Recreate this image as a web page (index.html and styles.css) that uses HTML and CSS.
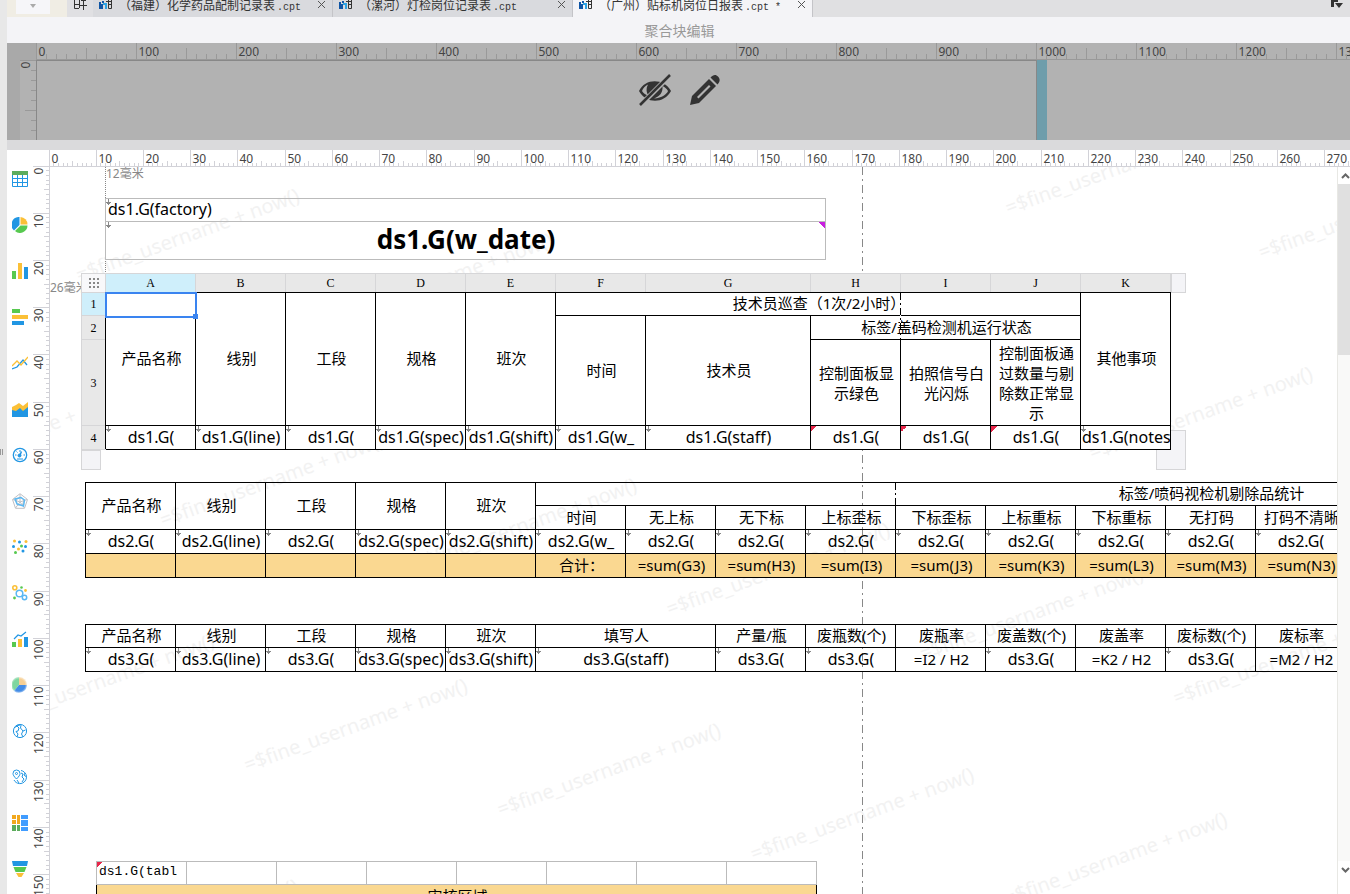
FILE: index.html
```
<!DOCTYPE html>
<html lang="zh-CN">
<head>
  <meta charset="UTF-8" />
  <meta name="viewport" content="width=device-width, initial-scale=1.0"/>
  <title>聚合块编辑</title>
  <link rel="stylesheet" href="styles.css">
</head>
<body>
  <svg class="defs" aria-hidden="true">
    <symbol id="file" viewBox="0 0 14 12">
      <path d="M0 4H2V6H4V8H2V11H0Z" fill="#0f55a5"/>
      <path d="M2 8H4V11H2ZM3 3H5V5H3Z" fill="#0f55a5"/>
      <path d="M4 5H8V11H6V7H4Z" fill="#2ea3e3"/>
      <path d="M7 3.500H13M9.500 0V10.500H12.500V0M9 6.500H13" fill="none" stroke="#333"/>
    </symbol>
  </svg>

  <div class="dock"><span class="grip"></span></div>

  <main class="designer">
    <nav class="tabs">
      <div class="tool-slot"><button class="tool-drop" aria-label="更多"><svg width="8" height="5"><path d="M1 1H7L4 5Z" fill="#aaa"/></svg></button></div>
      <button class="new-tab" aria-label="新建">
        <svg width="14" height="14" viewBox="0 0 14 14"><path d="M1.500 0V11.500H6M1 7.500H6M6.500 0V11M7 8.500H14M10.500 4V13M8 3.500H13" fill="none" stroke="#333"/></svg>
      </button>
      <div class="tab">
        <svg class="tab-icon"><use href="#file"/></svg>
        <span class="tab-name">（福建）化学药品配制记录表<small>.cpt</small></span>
        <button class="tab-close" aria-label="关闭"><svg width="9" height="9"><path d="M1 1L8 8M8 1L1 8"/></svg></button>
      </div>
      <div class="tab">
        <svg class="tab-icon"><use href="#file"/></svg>
        <span class="tab-name">（漯河）灯检岗位记录表<small>.cpt</small></span>
        <button class="tab-close" aria-label="关闭"><svg width="9" height="9"><path d="M1 1L8 8M8 1L1 8"/></svg></button>
      </div>
      <div class="tab active">
        <svg class="tab-icon"><use href="#file"/></svg>
        <span class="tab-name">（广州）贴标机岗位日报表<small>.cpt *</small></span>
        <button class="tab-close" aria-label="关闭"><svg width="9" height="9"><path d="M1 1L8 8M8 1L1 8"/></svg></button>
      </div>
      <button class="tab-list" aria-label="全部标签"><svg width="12" height="10"><path d="M0 0H7V3H3V8H0ZM4 4H12L8 9Z" fill="#333"/></svg></button>
    </nav>

    <h1 class="title">聚合块编辑</h1>

    <section class="block-editor">
      <div class="block-corner"></div>
      <div class="ruler-x" data-step="100" data-sub="10"></div>
      <div class="ruler-y block-y" data-step="100" data-sub="10"></div>
      <div class="block-body">
        <div class="block-page"></div>
        <div class="block-edge"></div>
        <div class="block-actions">
          <button aria-label="隐藏">
            <svg width="34" height="32" viewBox="0 0 34 32">
              <path d="M1 17C7 4 26 4 33 17C26 30 8 30 1 17Z" fill="#333"/>
              <path d="M4 17C5 14 7 12 10 10.500C8 14 8 19 11 22C8 21 5 19 4 17ZM30 17C29 20 24 24 16 24.500C22 22 25 19 24.500 12C27 13 29 15 30 17Z" fill="#b2b2b2"/>
              <path d="M0 30L31 -1L35 2L4 33Z" fill="#b2b2b2"/>
              <path d="M2 31L32 1" stroke="#333" stroke-width="2.500"/>
            </svg>
          </button>
          <button aria-label="编辑">
            <svg width="32" height="32" viewBox="0 0 32 32">
              <path d="M1 31L3 22L20 5L27 12L10 29Z" fill="#333"/>
              <path d="M8 23L20 11L21.500 12.500L9.500 24.500Z" fill="#b2b2b2"/>
              <path d="M21.500 3.500C24 .5 27 0 29 2.500C31.500 5 31 8 28.500 10.500Z" fill="#333"/>
            </svg>
          </button>
        </div>
      </div>
    </section>

    <div class="splitter"></div>

    <section class="report">
      <div class="ruler-x mm" data-step="47.244" data-sub="10" data-label="10"></div>
      <aside class="palette">
        <button aria-label="表格"><svg viewBox="0 0 16 16"><path d="M0 0H16V4H0Z" fill="#5cac5c"/><path d="M.5 4V15.500H15.500V4M0 7.500H16M0 11.500H16M5.500 4V16M10.500 4V16" fill="none" stroke="#2196e3"/></svg></button>
        <button aria-label="饼图"><svg viewBox="0 0 16 16"><path d="M7.500 0V8L2 13.500A7.700 7.700 0 0 1 7.500 0Z" fill="#2196e3"/><path d="M8.500 0A7.500 7.500 0 0 1 15.500 7.500H8.500Z" fill="#fbc037"/><path d="M15.500 8.500A7.500 7.500 0 0 1 3 14L8.500 8.500Z" fill="#57c94f"/></svg></button>
        <button aria-label="柱形图"><svg viewBox="0 0 16 16"><path d="M0 8H4V16H0Z" fill="#57c94f"/><path d="M6 0H10V16H6Z" fill="#fbc037"/><path d="M12 4H16V16H12Z" fill="#2196e3"/></svg></button>
        <button aria-label="条形图"><svg viewBox="0 0 16 16"><path d="M0 0H8V4H0Z" fill="#57c94f"/><path d="M0 6H16V10H0Z" fill="#fbc037"/><path d="M0 12H12V16H0Z" fill="#2196e3"/></svg></button>
        <button aria-label="折线图"><svg viewBox="0 0 16 16" fill="none"><path d="M0 14L5 12L11 5L15 10" stroke="#2196e3" stroke-width="1.300"/><path d="M0 11L5 6L9 10L16 2" stroke="#fbc037" stroke-width="1.300"/></svg></button>
        <button aria-label="面积图"><svg viewBox="0 0 16 16"><path d="M0 6L4 4L7 2L11 5L16 1V11H0Z" fill="#fbc037"/><path d="M0 9L4 10L8 7L11 10L16 6V16H0Z" fill="#2196e3"/></svg></button>
        <button aria-label="仪表盘"><svg viewBox="0 0 16 16" fill="none" stroke="#2196e3"><circle cx="8" cy="8" r="6.700" stroke-width="1.300"/><path d="M3 8H4.500M11.500 8H13M8 3V5M4.500 4.500L5.500 5.500M5 12H11"/><circle cx="7.500" cy="8.500" r="1.500" fill="#2196e3"/><path d="M8 8L9.500 4.500" stroke-width="1.500"/></svg></button>
        <button aria-label="雷达图"><svg viewBox="0 0 16 16" fill="none"><path d="M8 .7L15.500 6.500L12.500 15.300H3.500L.5 6.500ZM8 4L12 7L10.500 12H5.500L4 7ZM8 1V9L15 6.500M8 9L12.500 15M8 9L3.500 15M8 9L1 6.500" stroke="#c0c0c4"/><path d="M3 6L9 4.500L12.500 7L11.500 13L5 11Z" stroke="#5bb8f2" stroke-width="1.500"/></svg></button>
        <button aria-label="散点图"><svg viewBox="0 0 16 16"><g fill="#fbc037"><circle cx="2.500" cy="2" r="1.500"/><circle cx="14" cy="2.500" r="1.500"/><circle cx="6.500" cy="10" r="1.500"/></g><g fill="#2196e3"><circle cx="7.500" cy="3" r="1.500"/><circle cx="1.500" cy="7.500" r="1.500"/><circle cx="13.500" cy="7.500" r="1.500"/><circle cx="11" cy="12" r="1.500"/></g><g fill="#57c94f"><circle cx="9.500" cy="7" r="1.500"/><circle cx="3.500" cy="13.500" r="1.500"/></g></svg></button>
        <button aria-label="气泡图"><svg viewBox="0 0 16 16" fill="none"><circle cx="2.800" cy="2.800" r="2" stroke="#fbc037" stroke-width="1.600"/><circle cx="7.500" cy="8.500" r="3.300" stroke="#5bb8f2" stroke-width="1.500"/><circle cx="12.500" cy="12.500" r="2.200" stroke="#5bb8f2" stroke-width="1.500"/><circle cx="9.500" cy="2.500" r="1.300" fill="#57c94f"/><circle cx="13.500" cy="5.500" r="1.400" fill="#fbc037"/><circle cx="2.500" cy="13" r="1.400" fill="#57c94f"/></svg></button>
        <button aria-label="组合图"><svg viewBox="0 0 16 16"><path d="M0 11H4V16H0Z" fill="#57c94f"/><path d="M6 8H10V16H6Z" fill="#fbc037"/><path d="M12 6H16V16H12Z" fill="#2196e3"/><path d="M2 8L6 4L9 5L14 1" fill="none" stroke="#2196e3" stroke-width="1.200"/></svg></button>
        <button aria-label="渐变饼图">
          <svg viewBox="0 0 16 16">
            <defs><radialGradient id="rim"><stop offset=".7" stop-color="#fff" stop-opacity="0"/><stop offset="1" stop-color="#fff" stop-opacity=".7"/></radialGradient></defs>
            <path d="M7 8V0A8 8 0 0 0 2 14Z" fill="#7fd6a0"/><path d="M7 8V0A8 8 0 0 1 15 8Z" fill="#f6cf94"/><path d="M7 8H15A8 8 0 0 1 2 14Z" fill="#438ce6"/>
            <circle cx="7" cy="8" r="8.500" fill="url(#rim)"/>
          </svg>
        </button>
        <button aria-label="地图"><svg viewBox="0 0 16 16" fill="none" stroke="#2196e3"><circle cx="8" cy="8" r="6.600"/><path d="M2 5L5 3L7 5L6 8L4 8.500L6 11L5 14M9 2L8.500 5L11 8L13.500 7M11 8L9.500 11L11 14M4 3L8 2"/></svg></button>
        <button aria-label="地图标记"><svg viewBox="0 0 16 16" fill="none" stroke="#2196e3"><path d="M9 1.500A6.600 6.600 0 1 1 2 11"/><path d="M4.500 10C2 7.500 1 6 1 4.500A3.500 3.500 0 0 1 8 4.500C8 6 7 7.500 4.500 10Z"/><circle cx="4.500" cy="4.500" r="1"/><path d="M9 4L11 5L10 8L12 10L10 13M13 4L12 6L14.500 8M5 11L7 14"/></svg></button>
        <button aria-label="矩形树图"><svg viewBox="0 0 16 16"><path d="M0 0H4V4H0ZM0 5H4V9H0ZM5 0H8V9H5Z" fill="#f2a81d"/><path d="M0 10H4V16H0ZM5 10H8V16H5Z" fill="#5cac5c"/><path d="M9 0H16V4H9ZM9 5H16V11H9ZM9 12H16V16H9Z" fill="#409cff"/></svg></button>
        <button aria-label="漏斗图"><svg viewBox="0 0 16 16"><path d="M0 0H16L15 5H1Z" fill="#2196e3"/><path d="M1.500 6H14.500L12.500 11H3.500Z" fill="#57c94f"/><path d="M4 12H12L9.500 16H6.500Z" fill="#fbc037"/></svg></button>
      </aside>
      <div class="ruler-y mm" data-step="47.244" data-sub="10" data-label="10"></div>

      <div class="canvas">
        <svg class="backdrop" id="backdrop" aria-hidden="true"></svg>
        <span class="guide guide-top">12毫米</span>
        <span class="guide guide-left">26毫米</span>

        <table class="sheet title-sheet">
          <tr class="h23"><td class="down left">ds1.G(factory)</td></tr>
          <tr class="h38"><td class="down expand date">ds1.G(w_date)</td></tr>
        </table>

        <div class="selected-block">
          <table class="sheet patrol">
            <colgroup><col class="w24"><col class="w90" span="6"><col class="w165"><col class="w90" span="4"></colgroup>
            <tr class="heads">
              <th class="corner"><svg width="12" height="10"><path d="M1 1H11M1 5H11M1 9H11" stroke="#888" stroke-width="2" stroke-dasharray="2 2"/></svg></th>
              <th class="on">A</th><th>B</th><th>C</th><th>D</th><th>E</th><th>F</th><th>G</th><th>H</th><th>I</th><th>J</th><th>K</th>
            </tr>
            <tr class="h23">
              <th class="on">1</th>
              <td rowspan="3">产品名称</td><td rowspan="3">线别</td><td rowspan="3">工段</td><td rowspan="3">规格</td><td rowspan="3">班次</td>
              <td colspan="5">技术员巡查（1次/2小时）</td>
              <td rowspan="3">其他事项</td>
            </tr>
            <tr class="h24">
              <th>2</th>
              <td rowspan="2">时间</td><td rowspan="2">技术员</td><td colspan="3">标签/盖码检测机运行状态</td>
            </tr>
            <tr class="h86">
              <th>3</th>
              <td class="wrap">控制面板显示绿色</td><td class="wrap">拍照信号白光闪烁</td><td class="wrap">控制面板通过数量与剔除数正常显示</td>
            </tr>
            <tr class="h24">
              <th>4</th>
              <td class="down">ds1.G(</td><td class="down">ds1.G(line)</td><td class="down">ds1.G(</td><td class="down">ds1.G(spec)</td><td class="down">ds1.G(shift)</td>
              <td class="down">ds1.G(w_</td><td class="down">ds1.G(staff)</td><td class="cond">ds1.G(</td><td class="cond">ds1.G(</td><td class="cond">ds1.G(</td><td class="down">ds1.G(notes</td>
            </tr>
          </table>
          <span class="selection"></span>
          <span class="page-break patrol-break"></span>
          <span class="nub nub-right"></span>
          <span class="nub nub-bottom"></span>
          <span class="nub nub-corner"></span>
        </div>

        <div class="reject-block">
          <table class="sheet reject">
            <colgroup><col class="w90" span="20"></colgroup>
            <tr class="h23">
              <td rowspan="2">产品名称</td><td rowspan="2">线别</td><td rowspan="2">工段</td><td rowspan="2">规格</td><td rowspan="2">班次</td>
              <td colspan="15">标签/喷码视检机剔除品统计</td>
            </tr>
            <tr class="h24">
              <td>时间</td><td>无上标</td><td>无下标</td><td>上标歪标</td><td>下标歪标</td><td>上标重标</td><td>下标重标</td><td>无打码</td><td>打码不清晰</td>
            </tr>
            <tr class="h24">
              <td class="down">ds2.G(</td><td class="down">ds2.G(line)</td><td class="down">ds2.G(</td><td class="down">ds2.G(spec)</td><td class="down">ds2.G(shift)</td>
              <td class="down">ds2.G(w_</td><td class="down">ds2.G(</td><td class="down">ds2.G(</td><td class="down">ds2.G(</td><td class="down">ds2.G(</td><td class="down">ds2.G(</td><td class="down">ds2.G(</td><td class="down">ds2.G(</td><td class="down">ds2.G(</td>
            </tr>
            <tr class="h24 sum">
              <td></td><td></td><td></td><td></td><td></td><td>合计：</td>
              <td>=sum(G3)</td><td>=sum(H3)</td><td>=sum(I3)</td><td>=sum(J3)</td><td>=sum(K3)</td><td>=sum(L3)</td><td>=sum(M3)</td><td>=sum(N3)</td>
            </tr>
          </table>
          <span class="page-break reject-break"></span>
        </div>

        <table class="sheet waste">
          <colgroup><col class="w90" span="14"></colgroup>
          <tr class="h23">
            <td>产品名称</td><td>线别</td><td>工段</td><td>规格</td><td>班次</td><td colspan="2">填写人</td>
            <td>产量/瓶</td><td>废瓶数(个)</td><td>废瓶率</td><td>废盖数(个)</td><td>废盖率</td><td>废标数(个)</td><td>废标率</td>
          </tr>
          <tr class="h24">
            <td class="down">ds3.G(</td><td class="down">ds3.G(line)</td><td class="down">ds3.G(</td><td class="down">ds3.G(spec)</td><td class="down">ds3.G(shift)</td><td class="down" colspan="2">ds3.G(staff)</td>
            <td class="down">ds3.G(</td><td class="down">ds3.G(</td><td>=I2 / H2</td><td class="down">ds3.G(</td><td>=K2 / H2</td><td class="down">ds3.G(</td><td>=M2 / H2</td>
          </tr>
        </table>

        <table class="sheet audit">
          <colgroup><col class="w90" span="8"></colgroup>
          <tr class="h23 light">
            <td class="cond left mono">ds1.G(tabl</td><td></td><td></td><td></td><td></td><td></td><td></td><td></td>
          </tr>
          <tr class="h24 sum"><td colspan="8">审核区域</td></tr>
        </table>
      </div>

      <div class="scrollbar">
        <button aria-label="向上"><svg width="9" height="6"><path d="M1 5L4.500 1.500L8 5"/></svg></button>
        <div class="track"><div class="thumb"></div></div>
        <button aria-label="向下"><svg width="9" height="6"><path d="M1 1L4.500 4.500L8 1"/></svg></button>
      </div>
    </section>
  </main>

  <script src="designer.js"></script>
</body>
</html>
```
FILE: styles.css
```
* {
  box-sizing: border-box;
}

body {
  margin: 0;
  height: 100vh;
  display: flex;
  overflow: hidden;
  background: #fff;
  color: #000;
  font-family: "Noto Sans", "Noto Sans CJK SC", sans-serif;
  font-size: 15px;
}

button {
  border: 0;
  padding: 0;
  background: none;
  display: flex;
  align-items: center;
  justify-content: center;
}

.defs {
  position: absolute;
  width: 0;
  height: 0;
}

.dock {
  width: 7px;
  background: #e8e8e8;
  display: flex;
  align-items: center;
}

.grip {
  width: 3px;
  height: 6px;
  margin-top: 10px;
  border: solid #999;
  border-width: 0 1px;
}

.designer {
  flex: 1;
  min-width: 0;
  display: flex;
  flex-direction: column;
}

/* Tabs */
.tabs {
  height: 17px;
  display: flex;
  align-items: flex-end;
  overflow: hidden;
  background: #e0e0e2;
}

.tabs > * {
  height: 26px;
}

.tool-slot {
  width: 60px;
  padding: 0 9px 3px;
  background: #f0ede4;
}

.tool-drop {
  width: 34px;
  height: 23px;
  padding-top: 6px;
  background: #f6f6f9;
}

.new-tab {
  width: 26px;
  background: #e0e0e3;
}

.tab {
  width: 240px;
  padding: 0 6px;
  display: flex;
  align-items: center;
  background: #d9dade;
  border-right: 1px solid #c4c4c8;
}

.tab.active {
  background: #f4f4f7;
}

.tab-icon {
  width: 14px;
  height: 12px;
  margin-right: 6px;
}

.tab-name {
  flex: 1;
  font-family: "Noto Sans CJK SC", sans-serif;
  font-size: 12px;
  white-space: nowrap;
  color: #333;
}

.tab-name small {
  padding-left: 2px;
  font-family: "Liberation Mono", monospace;
  font-size: 10px;
}

.tab-close svg {
  fill: none;
  stroke: #555;
}

.tab-list {
  margin-left: auto;
  padding-right: 7px;
}

.title {
  margin: 0;
  height: 26px;
  padding-left: 2px;
  line-height: 28px;
  font-size: 14px;
  font-weight: normal;
  text-align: center;
  color: #999;
  background: #f4f4f7;
}

/* Rulers */
.ruler-x,
.ruler-y {
  position: relative;
  min-width: 0;
  min-height: 0;
  overflow: hidden;
}

.ruler-x svg,
.ruler-y svg {
  position: absolute;
  width: 100%;
  height: 100%;
  font-size: 12px;
  fill: #444;
}

.ruler-x line,
.ruler-y line {
  stroke: #999;
  shape-rendering: crispEdges;
}

.mm line {
  stroke: #d2d2d8;
}

/* Aggregation block editor */
.block-editor {
  height: 97px;
  display: grid;
  grid-template-columns: 29px 1fr;
  grid-template-rows: 17px 1fr;
  background: #b2b2b2;
}

.block-corner {
  background: #a9a9a9;
}

.block-editor .ruler-x {
  border-bottom: 1px solid #999;
}

.block-y {
  border-left: 13px solid #a9a9a9;
}

.block-body {
  position: relative;
  display: flex;
}

.block-page {
  width: 1001px;
  border: solid #888;
  border-width: 1px 1px 0;
}

.block-edge {
  width: 10px;
  background: #6e9dab;
}

.block-actions {
  position: absolute;
  inset: 0 28px 20px 0;
  display: flex;
  align-items: center;
  justify-content: center;
  gap: 17px;
}

.splitter {
  height: 10px;
  background: #dadadc;
}

/* Report designer */
.report {
  flex: 1;
  min-height: 0;
  display: grid;
  grid-template-columns: 26px 17px 1fr 13px;
  grid-template-rows: 17px 1fr;
}

.report .ruler-x {
  grid-column: 3 / 5;
  border-bottom: 1px solid #d2d2d8;
  margin-left: -1px;
}

.report .ruler-y {
  border-right: 1px solid #d2d2d8;
  margin-top: -1px;
}

.palette {
  grid-column: 1;
  overflow: hidden;
}

.palette button {
  width: 26px;
  height: 46px;
}

.palette button:first-child {
  height: 24px;
  margin-bottom: 11px;
}

.palette svg {
  width: 16px;
  height: 16px;
}

.canvas {
  position: relative;
  overflow: hidden;
  padding-top: 31px;
}

.backdrop {
  position: absolute;
  inset: 0;
  width: 100%;
  height: 100%;
  font-size: 20px;
  fill: #f2f2f2;
}

.guide {
  position: absolute;
  font-size: 12px;
  line-height: 14px;
  color: #888;
}

.guide-top {
  left: 55px;
  top: 0;
  height: 107px;
  border-left: 1px dotted #888;
}

.guide-left {
  left: 0;
  top: 114px;
  width: 56px;
  white-space: nowrap;
}

/* Sheets */
.sheet {
  position: relative;
  table-layout: fixed;
  border-collapse: collapse;
}

.sheet td {
  position: relative;
  padding: 0 0 2px 2px;
  border: 1px solid #000;
  text-align: center;
  line-height: 20px;
  white-space: nowrap;
  overflow: hidden;
}

.sheet .down,
.sheet .cond {
  padding-left: 1px;
  font-size: 16px;
}

.sheet .left {
  padding-left: 2px;
  text-align: left;
}

.sheet .wrap {
  padding: 0 6px 0 8px;
  white-space: normal;
}

.sheet .mono {
  font-family: "Liberation Mono", monospace;
  font-size: 13px;
}

.w24 { width: 24px; }
.w90 { width: 90px; }
.w165 { width: 165px; }

.h23 { height: 23px; }
.h24 { height: 24px; }
.h38 { height: 38px; }
.h86 { height: 86px; }

.down::before,
.cond::before,
.expand::after {
  content: '';
  position: absolute;
  left: 0;
  top: 0;
  width: 6px;
  height: 6px;
}

.down::before {
  background: url("data:image/svg+xml,%3csvg xmlns='http://www.w3.org/2000/svg' viewBox='0 0 6 6'%3e%3cpath fill='%23888' d='M2 0h1v3h2v1h-1v1h-1v1h-1v-1h-1v-1h-1v-1h2z'/%3e%3c/svg%3e");
}

.cond::before {
  background: linear-gradient(135deg, #e8264a 50%, transparent 50%);
}

.expand::after {
  left: auto;
  right: 0;
  background: linear-gradient(225deg, #c81ee0 50%, transparent 50%);
}

.sum td {
  background: #fad891;
}

.title-sheet {
  width: 721px;
  margin-left: 55px;
}

.title-sheet td,
.light td {
  border-color: #bbb;
}

.sheet .date {
  padding-bottom: 4px;
  font-size: 26px;
  font-weight: bold;
  line-height: 32px;
}

.selected-block {
  position: relative;
  z-index: 0;
  width: 1090px;
  margin: 13px 0 0 31px;
}

.patrol {
  width: 1090px;
}

.patrol td {
  background: #fff;
}

.patrol th {
  padding: 0;
  border: 1px solid #d6d6d8;
  border-right-color: #000;
  background: #e8e8e8;
  font-family: "Liberation Serif", serif;
  font-size: 12px;
  font-weight: normal;
  line-height: 14px;
}

.patrol .heads {
  height: 19px;
}

.patrol .heads th {
  border-right-color: #d6d6d8;
  border-bottom-color: #000;
}

.patrol th.on {
  background: #cfeffb;
}

.patrol .heads .corner {
  background: #f8f8fa;
  border-bottom-color: #d6d6d8;
}

.corner svg {
  display: block;
  margin: 0 auto;
}

.selection {
  position: absolute;
  left: 24px;
  top: 19px;
  width: 92px;
  height: 26px;
  border: 2px solid #3a84f0;
}

.selection::after {
  content: '';
  position: absolute;
  right: -3px;
  bottom: -3px;
  width: 5px;
  height: 5px;
  background: #3a84f0;
}

.page-break {
  position: absolute;
  width: 1px;
  background: repeating-linear-gradient(#000 0 7px, #fff 7px 10px, #000 10px 12px, #fff 12px 15px);
}

.patrol-break {
  left: 819px;
  top: 20px;
  height: 46px;
}

.nub {
  position: absolute;
  border: 1px solid #d6d6d8;
  background: #f4f4f7;
}

.nub-right {
  right: -15px;
  top: 0;
  width: 15px;
  height: 20px;
}

.nub-bottom {
  left: 0;
  bottom: -20px;
  width: 20px;
  height: 20px;
}

.nub-corner {
  right: -15px;
  bottom: -20px;
  width: 30px;
  height: 40px;
  z-index: -1;
}

.reject-block {
  position: relative;
  margin: 32px 0 0 35px;
}

.reject {
  width: 1801px;
}

.reject-break {
  left: 810px;
  top: 1px;
  height: 22px;
}

.waste {
  width: 1261px;
  margin: 46px 0 0 35px;
}

.audit {
  width: 721px;
  margin: 189px 0 0 46px;
}

/* Scrollbar */
.scrollbar {
  display: flex;
  flex-direction: column;
  padding-bottom: 16px;
  border-left: 1px solid #e8e8e4;
  overflow: hidden;
}

.scrollbar button {
  width: 15px;
  height: 17px;
}

.scrollbar button svg {
  fill: none;
  stroke: #666;
  stroke-width: 2;
}

.track {
  flex: 1;
  background: #f9f9f8;
}

.thumb {
  height: 171px;
  background: #e0e0e0;
}
```
FILE: designer.js
```
const NS = 'http://www.w3.org/2000/svg';

function add(parent, name, attrs, text) {
  const el = document.createElementNS(NS, name);
  for (const key in attrs) el.setAttribute(key, attrs[key]);
  if (text !== undefined) el.textContent = text;
  parent.appendChild(el);
  return el;
}

function drawRuler(box) {
  const step = Number(box.dataset.step);
  const sub = Number(box.dataset.sub);
  const label = Number(box.dataset.label || step);
  const vertical = box.classList.contains('ruler-y');
  const length = vertical ? box.clientHeight : box.clientWidth;
  const depth = vertical ? box.clientWidth : box.clientHeight;
  const [half, minor] = step === 100 ? [11, 5] : [5, 3];
  const svg = add(box, 'svg', {});

  for (let i = 0; i * step / sub < length; i++) {
    const pos = Math.floor(i * step / sub) + 0.5;
    const size = i % sub === 0 ? depth : i % (sub / 2) === 0 ? half : minor;
    if (vertical) {
      add(svg, 'line', { x1: depth - size, x2: depth, y1: pos, y2: pos });
    } else {
      add(svg, 'line', { x1: pos, x2: pos, y1: depth - size, y2: depth });
    }
    if (i % sub === 0) {
      const value = i / sub * label;
      if (vertical) {
        add(svg, 'text', { transform: `translate(10 ${pos + 1}) rotate(-90)`, 'text-anchor': 'end' }, value);
      } else {
        add(svg, 'text', { x: pos + 2, y: 13 }, value);
      }
    }
  }
}

function drawBackdrop(svg) {
  // watermark lattice
  for (let row = -1; row < 6; row++) {
    for (let col = -2; col < 7; col++) {
      const x = -55 + row * 84 + col * 253.3;
      const y = -130 + row * 245 + col * 44.5;
      add(svg, 'text', { transform: `translate(${x} ${y}) rotate(-20)` }, '=$fine_username + now()');
    }
  }
  // right edge of the printed page
  add(svg, 'line', { x1: 812.5, x2: 812.5, y1: 0, y2: '100%', stroke: '#888', 'stroke-dasharray': '8 4 2 4' });
}

document.querySelectorAll('.ruler-x, .ruler-y').forEach(drawRuler);
drawBackdrop(document.getElementById('backdrop'));
```
